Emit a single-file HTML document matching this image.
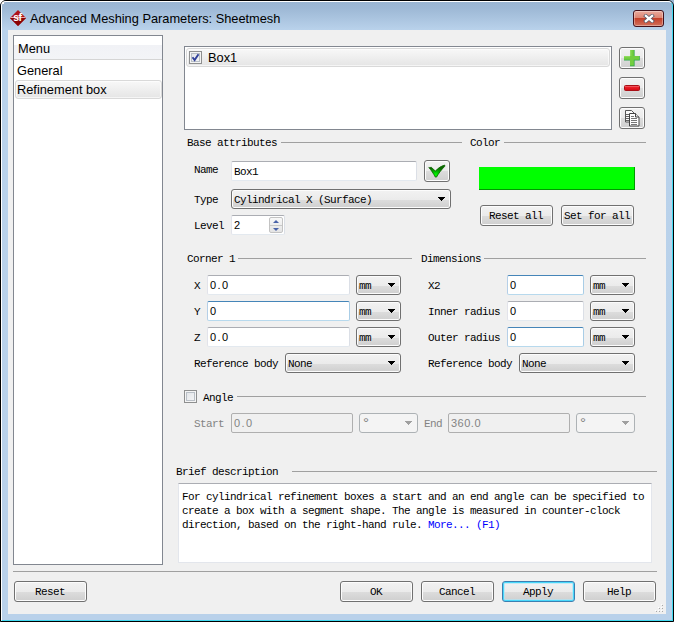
<!DOCTYPE html>
<html><head><meta charset="utf-8"><title>Advanced Meshing Parameters: Sheetmesh</title>
<style>
html,body{margin:0;padding:0;width:674px;height:622px;overflow:hidden;background:#000}
*{box-sizing:border-box}
#win,#win div,#win svg,#win span.a{position:absolute}
#win{left:0;top:0;width:674px;height:622px;background:linear-gradient(#99b4d1 0px,#9db8d5 8px,#b9d2eb 30px,#b9d1ea 100%);overflow:hidden}
#bk{left:0;top:0;width:674px;height:622px;border:1px solid #000;border-radius:6px 6px 0 0}
#hl{left:1px;top:1px;width:672px;height:620px;border:1px solid #fff;border-radius:5px 5px 0 0;border-right-color:#41d9f0;border-bottom-color:#41d9f0}
#client{left:8px;top:30px;width:658px;height:584px;background:#f0f0f0}
.ui{font:12.8px "Liberation Sans",sans-serif;color:#000;white-space:nowrap;line-height:16px;height:16px}
.t{font:11px "Liberation Mono",monospace;color:#000;white-space:pre;line-height:12px;height:12px;letter-spacing:-0.6px}
.n{font:11px "Liberation Sans",sans-serif;color:#000;white-space:nowrap;line-height:12px;height:12px}
.g{color:#838383}
.deg{font:15px "Liberation Sans",sans-serif;color:#838383;line-height:15px}
.ln{height:1px;background:#a0a0a0}
.inp{height:20px;background:#fff;border:1px solid #e3e9ef;border-top-color:#abadb3;border-left-color:#e2e3ea;border-right-color:#dbdfe6;border-radius:2px}
.inp.f,.inp.h{border-color:#4585b8 #a9cde6 #b7d9ed #b5cfe7}
.inp.d{background:#f0f0f0;border-color:#afafaf}
.btn{border:1px solid #707070;border-radius:3px;background:linear-gradient(#f2f2f2 0,#ebebeb 9.6px,#dddddd 9.6px,#cfcfcf 100%);box-shadow:inset 0 0 0 1px #fcfcfc}
.btn.def{border-color:#3c7fb1;box-shadow:inset 0 0 0 1px #48d8fb,inset 0 0 0 2px rgba(170,230,250,.6)}
.cb{height:20px}
.cb.d{border-color:#adb2b5;background:#f4f4f4;box-shadow:none}
.arr{width:0;height:0;border-left:3.5px solid transparent;border-right:3.5px solid transparent;border-top:4px solid #000}
.arr.g{border-top-color:#a0a0a0}
.chk{width:13px;height:13px;border:1px solid #8e8f8f;background:linear-gradient(135deg,#dfe2e6,#f8f8f8);box-shadow:inset 0 0 0 1px #f4f4f4, inset 0 0 0 2px #b9bfc6}
.sel{border:1px solid #d9d9d9;border-radius:3px;background:linear-gradient(#f8f8f8,#e5e5e5);box-shadow:inset 0 0 0 1px rgba(255,255,255,.6)}
</style></head><body>
<div id="win">
<div style="left:0;top:0;width:4px;height:4px;background:#fff"></div><div id="bk"></div><div id="hl"></div>
<svg style="left:10px;top:10px" width="16" height="16" viewBox="0 0 16 16"><polygon points="8,0 16,8 8,16 0,8" fill="#b01218"/><polygon points="0,8 16,8 8,16" fill="#8b0304"/><rect x="0.5" y="7.1" width="15" height="0.8" fill="#f6d0d0"/><text x="7.4" y="11.1" text-anchor="middle" font-family="Liberation Sans,sans-serif" font-weight="bold" font-size="10.5" letter-spacing="-0.6" fill="#fff">sf</text></svg>
<div class="ui" style="left:30px;top:11px">Advanced Meshing Parameters: Sheetmesh</div>
<div style="left:633px;top:10px;width:31px;height:17px;border:1px solid #43101a;border-radius:3px;background:linear-gradient(#e9a99d 0,#dd8573 45%,#c5402a 50%,#d1705c 100%);box-shadow:inset 0 0 0 1px rgba(255,255,255,.35)"><svg style="left:9px;top:3px" width="12" height="9" viewBox="0 0 12 9"><path d="M2.9 1.9 L9.1 7.1 M9.1 1.9 L2.9 7.1" stroke="#55586a" stroke-width="3.8" stroke-linecap="square"/><path d="M2.9 1.9 L9.1 7.1 M9.1 1.9 L2.9 7.1" stroke="#fff" stroke-width="2.3" stroke-linecap="square"/></svg></div>
<div id="client"></div>
<div class="" style="left:13px;top:35px;width:150px;height:530px;background:#fff;border:1px solid #828790"></div>
<div class="" style="left:14px;top:36px;width:148px;height:24px;background:linear-gradient(#fff 0,#fff 40%,#f1f2f6 41%,#f3f4f7 100%);border-bottom:1px solid #d5d5d5"></div>
<div class="ui" style="left:18px;top:41px">Menu</div>
<div class="ui" style="left:17px;top:63px">General</div>
<div class="sel" style="left:15px;top:80px;width:147px;height:19px;"></div>
<div class="ui" style="left:17px;top:82px">Refinement box</div>
<div class="" style="left:184px;top:46px;width:428px;height:84px;background:#fff;border:1px solid #828790"></div>
<div class="sel" style="left:186px;top:48px;width:424px;height:19px;"></div>
<div class="chk" style="left:189px;top:51px;width:13px;height:13px;"></div>
<svg style="left:191px;top:53px" width="9" height="9" viewBox="0 0 9 9"><path d="M1.5 4.2 L3.6 7 L7.5 1.2" stroke="#31419a" stroke-width="1.9" fill="none"/></svg>
<div class="ui" style="left:208px;top:50px">Box1</div>
<div class="btn" style="left:619px;top:47px;width:26px;height:22px;"></div>
<div class="btn" style="left:619px;top:77px;width:26px;height:22px;"></div>
<div class="btn" style="left:619px;top:107px;width:26px;height:22px;"></div>
<svg style="left:624px;top:50px" width="16" height="17" viewBox="0 0 16 17"><path d="M6 0h4.6v6h5.2v4.6h-5.2v5.6h-4.6v-5.6h-6v-4.6h6z" fill="#2fa64e"/><path d="M6 0h3.8v6h5.4v3.8h-5.4v5.7h-3.8v-5.7h-6v-3.8h6z" fill="#72cd3f"/><path d="M6 0h1.4v6h-1.4zM0 6h6v1.2h-6z" fill="#8fdc5e"/></svg>
<svg style="left:624px;top:80px" width="16" height="16" viewBox="0 0 16 16"><defs><linearGradient id="gm" x1="0" y1="0" x2="0" y2="1"><stop offset="0" stop-color="#f08a8e"/><stop offset="0.4" stop-color="#ea1c26"/><stop offset="1" stop-color="#d00812"/></linearGradient></defs><rect x="0.5" y="5.5" width="15" height="5" rx="1" fill="url(#gm)" stroke="#a80f16"/></svg>
<svg style="left:624px;top:110px" width="16" height="17" viewBox="0 0 16 17"><path d="M1.5 0.5h6l3 3v8.5h-9z" fill="#fafafa" stroke="#555"/><path d="M2 4.5h3M2 6.5h3M2 8.5h3M2 10.5h3" stroke="#666"/><path d="M5.5 3.5h6l3.5 3.5v9h-9.5z" fill="#fff" stroke="#444"/><path d="M11.5 3.5v3.5h3.5" fill="#e8e8e8" stroke="#444"/><path d="M7 6.5h3M7 8.5h6M7 10.5h6M7 12.5h6M7 14.5h6" stroke="#777"/></svg>
<div class="t " style="left:187px;top:137px">Base attributes</div>
<div class="ln" style="left:281px;top:142px;width:181px"></div>
<div class="t " style="left:470px;top:137px">Color</div>
<div class="ln" style="left:504px;top:142px;width:142px"></div>
<div class="t " style="left:194px;top:164px">Name</div>
<div class="inp " style="left:231px;top:161px;width:186px"></div>
<div class="t " style="left:234px;top:166px">Box1</div>
<div class="btn" style="left:424px;top:160px;width:26px;height:22px;"></div>
<svg style="left:424px;top:160px" width="26" height="22" viewBox="0 0 26 22"><defs><radialGradient id="gc" cx="0.42" cy="0.8" r="0.6"><stop offset="0" stop-color="#00ff00"/><stop offset="0.35" stop-color="#00c800"/><stop offset="1" stop-color="#0a6a00"/></radialGradient></defs><path d="M5.1 7.7 L7.3 7.3 L11.4 11.1 C14 8 17.8 5.8 20.8 5.1 L20.7 6.4 C17.5 9.5 14.5 13.5 12.5 17.1 L11.3 17.1 C9.5 13.5 7 10 4.8 7.5 Z" fill="url(#gc)" stroke="#0c6400" stroke-width="0.8" stroke-linejoin="round"/></svg>
<div class="" style="left:479px;top:167px;width:156px;height:23px;background:#00ff00;border-right:1px solid #009a00;border-bottom:1px solid #009a00"></div>
<div class="t " style="left:194px;top:194px">Type</div>
<div class="btn cb" style="left:231px;top:189px;width:220px"></div>
<div class="t " style="left:234px;top:194px">Cylindrical X (Surface)</div>
<svg style="left:438px;top:197px" width="7" height="4" viewBox="0 0 7 4" shape-rendering="crispEdges"><path d="M0 0h7v1h-7zM1 1h5v1h-5zM2 2h3v1h-3zM3 3h1v1h-1z" fill="#000"/></svg>
<div class="btn " style="left:480px;top:205px;width:73px;height:21px"></div>
<div class="t " style="left:489px;top:210px">Reset all</div>
<div class="btn " style="left:561px;top:205px;width:73px;height:21px"></div>
<div class="t " style="left:564px;top:210px">Set for all</div>
<div class="t " style="left:194px;top:220px">Level</div>
<div class="inp " style="left:231px;top:215px;width:54px"></div>
<div class="n " style="left:234px;top:219px;letter-spacing:0">2</div>
<div class="" style="left:269px;top:217px;width:14px;height:16px;border:1px solid #c3c3c3;border-radius:2px;background:linear-gradient(#f8f8f8,#e4e4e4)"></div>
<div class="" style="left:270px;top:225px;width:12px;height:1px;background:#c9c9c9"></div>
<div style="left:273px;top:220px;width:0;height:0;border-left:3px solid transparent;border-right:3px solid transparent;border-bottom:3px solid #4a63a8"></div>
<div style="left:273px;top:228px;width:0;height:0;border-left:3px solid transparent;border-right:3px solid transparent;border-top:3px solid #4a63a8"></div>
<div class="t " style="left:187px;top:253px">Corner 1</div>
<div class="ln" style="left:238px;top:258px;width:174px"></div>
<div class="t " style="left:421px;top:253px">Dimensions</div>
<div class="ln" style="left:484px;top:258px;width:162px"></div>
<div class="t " style="left:194px;top:280px">X</div>
<div class="inp " style="left:207px;top:275px;width:143px"></div>
<div class="n " style="left:210px;top:279px;letter-spacing:1.4px">0.0</div>
<div class="btn cb" style="left:356px;top:275px;width:45px"></div>
<div class="t " style="left:359px;top:280px">mm</div>
<svg style="left:388px;top:283px" width="7" height="4" viewBox="0 0 7 4" shape-rendering="crispEdges"><path d="M0 0h7v1h-7zM1 1h5v1h-5zM2 2h3v1h-3zM3 3h1v1h-1z" fill="#000"/></svg>
<div class="t " style="left:194px;top:306px">Y</div>
<div class="inp f" style="left:207px;top:301px;width:143px"></div>
<div class="n " style="left:210px;top:305px;letter-spacing:0">0</div>
<div class="btn cb" style="left:356px;top:301px;width:45px"></div>
<div class="t " style="left:359px;top:306px">mm</div>
<svg style="left:388px;top:309px" width="7" height="4" viewBox="0 0 7 4" shape-rendering="crispEdges"><path d="M0 0h7v1h-7zM1 1h5v1h-5zM2 2h3v1h-3zM3 3h1v1h-1z" fill="#000"/></svg>
<div class="t " style="left:194px;top:332px">Z</div>
<div class="inp " style="left:207px;top:327px;width:143px"></div>
<div class="n " style="left:210px;top:331px;letter-spacing:1.4px">0.0</div>
<div class="btn cb" style="left:356px;top:327px;width:45px"></div>
<div class="t " style="left:359px;top:332px">mm</div>
<svg style="left:388px;top:335px" width="7" height="4" viewBox="0 0 7 4" shape-rendering="crispEdges"><path d="M0 0h7v1h-7zM1 1h5v1h-5zM2 2h3v1h-3zM3 3h1v1h-1z" fill="#000"/></svg>
<div class="t " style="left:194px;top:358px">Reference body</div>
<div class="btn cb" style="left:285px;top:353px;width:116px"></div>
<div class="t " style="left:288px;top:358px">None</div>
<svg style="left:388px;top:361px" width="7" height="4" viewBox="0 0 7 4" shape-rendering="crispEdges"><path d="M0 0h7v1h-7zM1 1h5v1h-5zM2 2h3v1h-3zM3 3h1v1h-1z" fill="#000"/></svg>
<div class="t " style="left:428px;top:280px">X2</div>
<div class="inp h" style="left:507px;top:275px;width:77px"></div>
<div class="n " style="left:510px;top:279px;letter-spacing:0">0</div>
<div class="btn cb" style="left:590px;top:275px;width:45px"></div>
<div class="t " style="left:593px;top:280px">mm</div>
<svg style="left:622px;top:283px" width="7" height="4" viewBox="0 0 7 4" shape-rendering="crispEdges"><path d="M0 0h7v1h-7zM1 1h5v1h-5zM2 2h3v1h-3zM3 3h1v1h-1z" fill="#000"/></svg>
<div class="t " style="left:428px;top:306px">Inner radius</div>
<div class="inp " style="left:507px;top:301px;width:77px"></div>
<div class="n " style="left:510px;top:305px;letter-spacing:0">0</div>
<div class="btn cb" style="left:590px;top:301px;width:45px"></div>
<div class="t " style="left:593px;top:306px">mm</div>
<svg style="left:622px;top:309px" width="7" height="4" viewBox="0 0 7 4" shape-rendering="crispEdges"><path d="M0 0h7v1h-7zM1 1h5v1h-5zM2 2h3v1h-3zM3 3h1v1h-1z" fill="#000"/></svg>
<div class="t " style="left:428px;top:332px">Outer radius</div>
<div class="inp h" style="left:507px;top:327px;width:77px"></div>
<div class="n " style="left:510px;top:331px;letter-spacing:0">0</div>
<div class="btn cb" style="left:590px;top:327px;width:45px"></div>
<div class="t " style="left:593px;top:332px">mm</div>
<svg style="left:622px;top:335px" width="7" height="4" viewBox="0 0 7 4" shape-rendering="crispEdges"><path d="M0 0h7v1h-7zM1 1h5v1h-5zM2 2h3v1h-3zM3 3h1v1h-1z" fill="#000"/></svg>
<div class="t " style="left:428px;top:358px">Reference body</div>
<div class="btn cb" style="left:519px;top:353px;width:116px"></div>
<div class="t " style="left:522px;top:358px">None</div>
<svg style="left:622px;top:361px" width="7" height="4" viewBox="0 0 7 4" shape-rendering="crispEdges"><path d="M0 0h7v1h-7zM1 1h5v1h-5zM2 2h3v1h-3zM3 3h1v1h-1z" fill="#000"/></svg>
<div class="chk" style="left:184px;top:390px;width:13px;height:13px;"></div>
<div class="t " style="left:203px;top:392px">Angle</div>
<div class="ln" style="left:237px;top:396px;width:409px"></div>
<div class="t g" style="left:194px;top:418px">Start</div>
<div class="inp d" style="left:231px;top:413px;width:122px"></div>
<div class="n g" style="left:234px;top:417px;letter-spacing:1.4px">0.0</div>
<div class="btn cb d" style="left:359px;top:413px;width:59px"></div>
<div class="deg" style="left:363px;top:415px">°</div>
<svg style="left:405px;top:421px" width="7" height="4" viewBox="0 0 7 4" shape-rendering="crispEdges"><path d="M0 0h7v1h-7zM1 1h5v1h-5zM2 2h3v1h-3zM3 3h1v1h-1z" fill="#a0a0a0"/></svg>
<div class="t g" style="left:424px;top:418px">End</div>
<div class="inp d" style="left:448px;top:413px;width:122px"></div>
<div class="n g" style="left:451px;top:417px;letter-spacing:0.5px">360.0</div>
<div class="btn cb d" style="left:576px;top:413px;width:59px"></div>
<div class="deg" style="left:580px;top:415px">°</div>
<svg style="left:622px;top:421px" width="7" height="4" viewBox="0 0 7 4" shape-rendering="crispEdges"><path d="M0 0h7v1h-7zM1 1h5v1h-5zM2 2h3v1h-3zM3 3h1v1h-1z" fill="#a0a0a0"/></svg>
<div class="t " style="left:176px;top:466px">Brief description</div>
<div class="ln" style="left:292px;top:471px;width:365px"></div>
<div class="" style="left:178px;top:483px;width:474px;height:80px;background:#fff;border:1px solid #e3e6ec;border-top-color:#abadb3"></div>
<div class="t " style="left:182px;top:491px">For cylindrical refinement boxes a start and an end angle can be specified to</div>
<div class="t " style="left:182px;top:505px">create a box with a segment shape. The angle is measured in counter-clock</div>
<div class="t " style="left:182px;top:519px">direction, based on the right-hand rule. <span style="color:#0000ff">More... (F1)</span></div>
<div class="ln" style="left:13px;top:571px;width:644px"></div>
<div class="btn " style="left:14px;top:581px;width:73px;height:21px"></div>
<div class="t " style="left:35px;top:586px">Reset</div>
<div class="btn " style="left:340px;top:581px;width:73px;height:21px"></div>
<div class="t " style="left:370px;top:586px">OK</div>
<div class="btn " style="left:421px;top:581px;width:73px;height:21px"></div>
<div class="t " style="left:439px;top:586px">Cancel</div>
<div class="btn def" style="left:502px;top:581px;width:73px;height:21px"></div>
<div class="t " style="left:523px;top:586px">Apply</div>
<div class="btn " style="left:583px;top:581px;width:73px;height:21px"></div>
<div class="t " style="left:607px;top:586px">Help</div>
<div class="" style="left:655px;top:610px;width:1px;height:1px;background:#fff"></div>
<div class="" style="left:656px;top:611px;width:1px;height:1px;background:#a8a8a8"></div>
<div class="" style="left:658px;top:610px;width:1px;height:1px;background:#fff"></div>
<div class="" style="left:659px;top:611px;width:1px;height:1px;background:#a8a8a8"></div>
<div class="" style="left:661px;top:610px;width:1px;height:1px;background:#fff"></div>
<div class="" style="left:662px;top:611px;width:1px;height:1px;background:#a8a8a8"></div>
<div class="" style="left:658px;top:607px;width:1px;height:1px;background:#fff"></div>
<div class="" style="left:659px;top:608px;width:1px;height:1px;background:#a8a8a8"></div>
<div class="" style="left:661px;top:607px;width:1px;height:1px;background:#fff"></div>
<div class="" style="left:662px;top:608px;width:1px;height:1px;background:#a8a8a8"></div>
<div class="" style="left:661px;top:604px;width:1px;height:1px;background:#fff"></div>
<div class="" style="left:662px;top:605px;width:1px;height:1px;background:#a8a8a8"></div>
</div>
</body></html>
